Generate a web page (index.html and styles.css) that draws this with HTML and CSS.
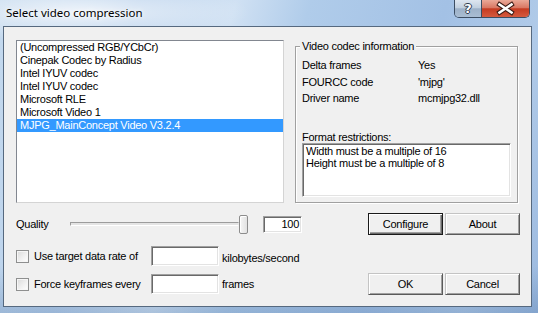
FILE: index.html
```html
<!DOCTYPE html>
<html>
<head>
<meta charset="utf-8">
<link rel="stylesheet" href="styles.css">
</head>
<body>
<div class="window">
  <div class="titlebar">
    <span class="title">Select video compression</span>
    <div class="caption-btns">
      <span class="cbtn help">?</span>
      <span class="cbtn close">
        <svg width="47" height="17" viewBox="0 0 47 17">
          <path d="M17.5 4.5 L29.5 12.5 M29.5 4.5 L17.5 12.5" stroke="#3a1a14" stroke-width="4.6" stroke-linecap="square" fill="none"/>
          <path d="M17.5 4.5 L29.5 12.5 M29.5 4.5 L17.5 12.5" stroke="#ffffff" stroke-width="2.6" stroke-linecap="square" fill="none"/>
        </svg>
      </span>
    </div>
  </div>
  <div class="client">
    <div class="top">
      <div class="listbox">
        <div class="item">(Uncompressed RGB/YCbCr)</div>
        <div class="item">Cinepak Codec by Radius</div>
        <div class="item">Intel IYUV codec</div>
        <div class="item">Intel IYUV codec</div>
        <div class="item">Microsoft RLE</div>
        <div class="item">Microsoft Video 1</div>
        <div class="item sel">MJPG_MainConcept Video V3.2.4</div>
      </div>
      <fieldset class="group">
        <legend>Video codec information</legend>
        <div class="info">
          <div class="info-row"><span class="k">Delta frames</span><span>Yes</span></div>
          <div class="info-row"><span class="k">FOURCC code</span><span>'mjpg'</span></div>
          <div class="info-row"><span class="k">Driver name</span><span>mcmjpg32.dll</span></div>
        </div>
        <div class="fr-label">Format restrictions:</div>
        <div class="fr-box">Width must be a multiple of 16<br>Height must be a multiple of 8</div>
      </fieldset>
    </div>
    <div class="row quality">
      <span class="q-label">Quality</span>
      <div class="slider"><div class="track"></div><div class="thumb"></div></div>
      <div class="edit num">100</div>
      <div class="btns">
        <span class="btn default">Configure</span>
        <span class="btn">About</span>
      </div>
    </div>
    <div class="row rate">
      <span class="chk"><span class="box"></span>Use target data rate of</span>
      <div class="edit field"></div>
      <span class="unit low">kilobytes/second</span>
    </div>
    <div class="row keys">
      <span class="chk"><span class="box"></span>Force keyframes every</span>
      <div class="edit field"></div>
      <span class="unit">frames</span>
      <div class="btns">
        <span class="btn">OK</span>
        <span class="btn">Cancel</span>
      </div>
    </div>
  </div>
</div>
</body>
</html>
```
FILE: styles.css
```css
* { box-sizing: border-box; }
body {
  margin: 0;
  width: 538px;
  height: 313px;
  overflow: hidden;
  font-family: "Liberation Sans", Arial, sans-serif;
  font-size: 11px;
  letter-spacing: -0.25px;
  color: #000;
}
.window {
  width: 538px;
  height: 313px;
  padding: 0 6px 6px 3px;
  display: flex;
  flex-direction: column;
  background:
    radial-gradient(ellipse 170px 30px at 80px 12px, rgba(255,255,255,.75), rgba(255,255,255,0)),
    linear-gradient(180deg, rgba(255,255,255,0) 85%, rgba(60,100,150,.25) 100%),
    linear-gradient(105deg, #c4d9ee 0%, #b9d1ec 22%, #d0e1f3 38%, #b0ccea 50%, #a3c1e5 72%, #b0cae8 88%, #9bb9df 100%);
}
.titlebar {
  height: 26px;
  flex-shrink: 0;
  display: flex;
  align-items: flex-start;
}
.title {
  font-family: "Noto Sans", sans-serif;
  font-size: 11.5px;
  letter-spacing: 0;
  line-height: 26px;
  padding-left: 3px;
  color: #000;
  text-shadow: 0 0 8px #fff, 0 0 4px #fff;
}
.caption-btns {
  margin-left: auto;
  margin-right: 2px;
  display: flex;
  height: 18px;
  border: 1px solid #3c4d62;
  border-top: none;
  border-radius: 0 0 5px 5px;
  overflow: hidden;
}
.cbtn { display: flex; align-items: center; justify-content: center; height: 17px; }
.help {
  width: 27px;
  border-right: 1px solid #3c4d62;
  background: linear-gradient(180deg, #dde6f0 0%, #c2d0df 45%, #9db1c8 52%, #a9bdd3 100%);
  color: #fff;
  font-family: "DejaVu Sans", sans-serif;
  font-weight: bold;
  font-size: 13px;
  letter-spacing: 0;
  text-shadow: 1px 0 #2e3c4e, -1px 0 #2e3c4e, 0 1px #2e3c4e, 0 -1px #2e3c4e;
}
.close {
  width: 47px;
  background: linear-gradient(180deg, #eaa998 0%, #d97864 45%, #c53b22 52%, #d55a3e 100%);
}
.close svg { display: block; }
.client {
  flex: 1;
  background: #f0f0f0;
  border: 1px solid #56697f;
  padding: 13px 11px 0 12px;
}
.top { display: flex; }
.listbox {
  width: 268px;
  height: 163px;
  background: #fff;
  border: 1px solid;
  border-color: #828790 #d4d4d4 #d4d4d4 #828790;
}
.item {
  height: 13px;
  line-height: 13px;
  padding-left: 3px;
  white-space: nowrap;
}
.item.sel { background: #3399ff; color: #fff; }
.group {
  margin: 0 0 0 11px;
  padding: 0 6px;
  width: 223px;
  height: 163px;
  min-width: 0;
  border: 1px solid #a0a0a0;
  box-shadow: inset 1px 1px #fff, 1px 1px #fff;
}
.group legend {
  padding: 0 2px;
  margin-left: -2px;
  line-height: 13px;
  background: #f0f0f0;
}
.info { margin-top: 4px; }
.info-row { display: flex; height: 16.5px; line-height: 16.5px; }
.info-row .k { width: 116px; }
.fr-label { margin-top: 25.5px; line-height: 11px; height: 11px; }
.fr-box {
  height: 54px;
  background: #fff;
  border: 1px solid;
  border-color: #a0a0a0 #fff #fff #a0a0a0;
  box-shadow: inset 1px 1px #696969, inset -1px -1px #e3e3e3;
  padding: 1px 3px;
  line-height: 12px;
}
.row { display: flex; align-items: center; }
.quality { margin-top: 10px; height: 22px; }
.q-label { width: 50px; }
.slider {
  width: 186px;
  height: 19px;
  padding: 0 4px;
  display: flex;
  align-items: center;
}
.track {
  flex: 1;
  height: 4px;
  border: 1px solid;
  border-color: #9c9c9c #e8e8e8 #fff #9c9c9c;
  background: #e4e4e4;
}
.thumb {
  width: 9px;
  height: 19px;
  border: 1px solid #8c8c8c;
  border-radius: 2px;
  background: linear-gradient(90deg, #f6f6f6, #e2e2e2);
  box-shadow: inset 1px 1px #fff;
}
.edit {
  background: #fff;
  border: 1px solid;
  border-color: #a0a0a0 #fff #fff #a0a0a0;
  box-shadow: inset 1px 1px #696969, inset -1px -1px #e3e3e3;
}
.num {
  margin-left: 11px;
  width: 39px;
  height: 17px;
  line-height: 15px;
  text-align: right;
  padding-right: 2px;
}
.btns { margin-left: auto; display: flex; gap: 2px; }
.btn {
  width: 75px;
  height: 22px;
  display: flex;
  align-items: center;
  justify-content: center;
  background: #f0f0f0;
  border: 1px solid;
  border-color: #c4c4c4 #5a5a5a #5a5a5a #c4c4c4;
  box-shadow: inset 1px 1px #fff, inset -1px -1px #a0a0a0;
}
.btn.default {
  border-color: #1a1a1a;
  box-shadow: inset 1px 1px #fff, inset -1px -1px #696969, inset -2px -2px #a0a0a0;
}
.rate { margin-top: 11px; height: 20px; }
.keys { margin-top: 7px; height: 22px; }
.chk { width: 135px; display: flex; align-items: center; gap: 5px; }
.box {
  width: 13px;
  height: 13px;
  border: 1px solid #8e8f8f;
  background: linear-gradient(135deg, #dadada 0%, #f2f2f2 60%, #fff 100%);
  box-shadow: inset 0 0 0 1px #f6f6f6;
}
.field { width: 68px; height: 20px; }
.unit { margin-left: 3px; }
.unit.low { padding-top: 4px; }
```
